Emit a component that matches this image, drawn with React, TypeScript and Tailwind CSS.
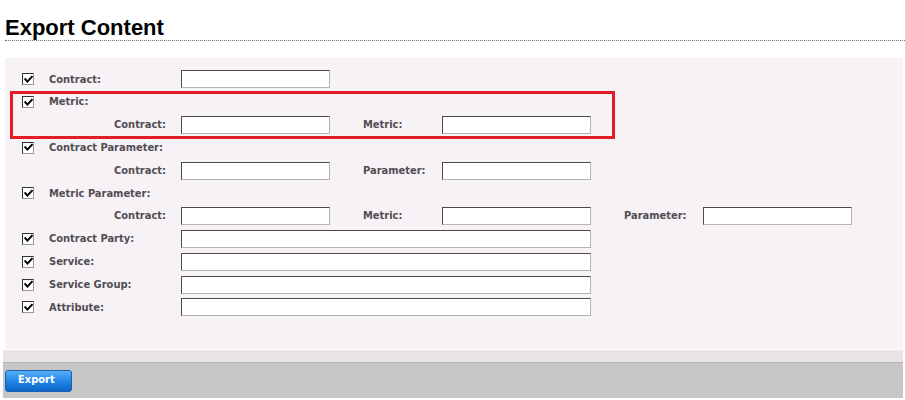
import React from 'react';

const labelFont = { fontFamily: '"DejaVu Sans Condensed", "DejaVu Sans", sans-serif' };

// Checked checkbox, old-school sunken look
const CheckBox: React.FC = () => (
    <span className="inline-flex w-[12px] h-[12px] bg-white border border-t-[#333333] border-l-[#333333] border-b-[#9a9a9a] border-r-[#9a9a9a] items-center justify-center">
        <svg viewBox="0 0 10 10" className="w-[9px] h-[9px]">
            <path d="M1.4 4.6 L3.8 7.3 L8.7 2.0" fill="none" stroke="#000" strokeWidth="2.2" strokeLinecap="square" />
        </svg>
    </span>
);

const Field: React.FC<{ wide?: boolean }> = ({ wide }) => (
    <input
        type="text"
        className={`${wide ? 'w-[410px]' : 'w-[149px]'} h-[18px] bg-white border border-t-[#4b4b4b] border-l-[#4b4b4b] border-b-[#b5b5b5] border-r-[#b5b5b5] outline-none`}
    />
);

const Row: React.FC<{ children: React.ReactNode }> = ({ children }) => (
    <div className="h-[22.8px] flex items-center">{children}</div>
);

// top-level row: checkbox + label (+ optional field)
const MainRow: React.FC<{ label: string; field?: 'short' | 'wide' }> = ({ label, field }) => (
    <Row>
        <div className="w-[44px] pl-[17px] flex items-center">
            <CheckBox />
        </div>
        <div className="w-[132px] text-[11px] font-bold text-[#514d52] pt-[1px]" style={labelFont}>{label}</div>
        {field && <Field wide={field === 'wide'} />}
    </Row>
);

// indented row: pairs of right/left labels + fields
const SubRow: React.FC<{ labels: string[] }> = ({ labels }) => (
    <Row>
        <div className="w-[44px]" />
        <div className="w-[117px] text-right text-[11px] font-bold text-[#514d52] pt-[1px]" style={labelFont}>{labels[0]}:</div>
        <div className="w-[15px]" />
        <Field />
        {labels.slice(1).map((l) => (
            <React.Fragment key={l}>
                <div className="w-[33px]" />
                <div className="w-[79px] text-[11px] font-bold text-[#514d52] pt-[1px]" style={labelFont}>{l}:</div>
                <Field />
            </React.Fragment>
        ))}
    </Row>
);

export default function App() {
    return (
        <div className="w-[905px] h-[400px] bg-white overflow-hidden">
            {/* Header */}
            <div className="pl-[5px] pt-[16px]">
                <h1 className="text-[22px] font-bold text-black leading-[24px]" style={{ fontFamily: '"Liberation Sans", Arial, sans-serif' }}>
                    Export Content
                </h1>
                <div className="border-b border-dotted border-[#6e6e6e]" />
            </div>

            <div className="ml-[3px] w-[900px] mt-[17px]">
                {/* Form panel */}
                <div className="h-[291px] bg-[#f6f2f6] pt-[10px] ml-[2px]">
                    <MainRow label="Contract:" field="short" />
                    <div className="relative">
                        <span className="absolute left-[5px] top-[0px] w-[605px] h-[48px] border-[3px] border-[#e41c24] pointer-events-none" />
                        <MainRow label="Metric:" />
                        <SubRow labels={['Contract', 'Metric']} />
                    </div>
                    <MainRow label="Contract Parameter:" />
                    <SubRow labels={['Contract', 'Parameter']} />
                    <MainRow label="Metric Parameter:" />
                    <SubRow labels={['Contract', 'Metric', 'Parameter']} />
                    <MainRow label="Contract Party:" field="wide" />
                    <MainRow label="Service:" field="wide" />
                    <MainRow label="Service Group:" field="wide" />
                    <MainRow label="Attribute:" field="wide" />
                </div>

                {/* Footer */}
                <div className="h-[1px] bg-white" />
                <div className="h-[13px] bg-[#e7e3e7] border-b border-[#b4b2b4]" />
                <div className="h-[35px] bg-[#c6c6c6] flex items-center pl-[2px]">
                    <button
                        type="button"
                        className="w-[67px] h-[22px] rounded-[3px] border border-[#1a5fb4] bg-gradient-to-b from-[#56aef5] via-[#2386e8] to-[#0d64c8] text-white text-[11px] font-bold text-left pl-[12px]"
                        style={labelFont}
                    >
                        Export
                    </button>
                </div>
            </div>
        </div>
    );
}
